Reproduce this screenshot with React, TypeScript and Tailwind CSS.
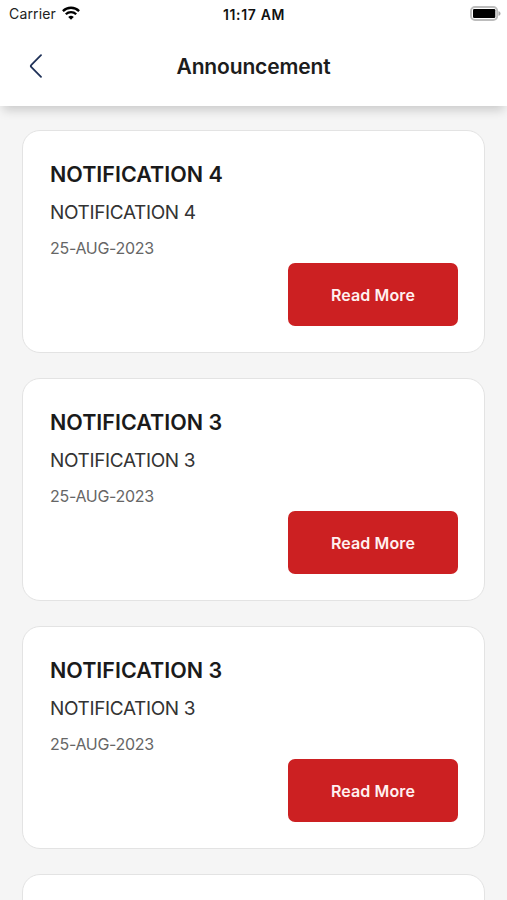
import React, { FC } from "react";

type Announcement = {
  id: number;
  title: string;
  description: string;
  date: string;
};

const announcements: Announcement[] = [
  { id: 1, title: "NOTIFICATION 4", description: "NOTIFICATION 4", date: "25-AUG-2023" },
  { id: 2, title: "NOTIFICATION 3", description: "NOTIFICATION 3", date: "25-AUG-2023" },
  { id: 3, title: "NOTIFICATION 3", description: "NOTIFICATION 3", date: "25-AUG-2023" },
];

const WifiIcon = () => (
  <svg width="18" height="14" viewBox="0 0 18 14" fill="none" stroke="#000" strokeWidth="2.3">
    <path d="M0.9 5.1a11.5 11.5 0 0 1 16.2 0" />
    <path d="M3.8 8.2a7.4 7.4 0 0 1 10.4 0" />
    <path d="M9 13.8 6.2 11a4 4 0 0 1 5.6 0Z" fill="#000" stroke="none" />
  </svg>
);

const BatteryIcon = () => (
  <svg width="31" height="15" viewBox="0 0 31 15" fill="none">
    <rect x="1" y="1" width="26.2" height="13" rx="4" stroke="#bcbcbc" strokeWidth="1.9" />
    <rect x="3" y="3" width="22.3" height="9" rx="1.2" fill="#000" />
    <path d="M28.5 5.2c1.3.4 2 1.2 2 2.3s-.7 1.9-2 2.3Z" fill="#a5a5a5" />
  </svg>
);

const StatusBar = () => (
  <div className="grid h-[26px] grid-cols-3 items-center pl-[9px] pr-[6px] text-[14px] text-[#222]">
    <div className="flex items-center gap-[6px]">
      <span className="tracking-[0.15px]">Carrier</span>
      <WifiIcon />
    </div>
    <span className="pt-[2px] pr-[2px] text-center text-[14px] font-semibold tracking-[0.65px] text-[#111]">11:17 AM</span>
    <div className="flex justify-end">
      <BatteryIcon />
    </div>
  </div>
);

const Header = () => (
  <header className="relative h-[106px] bg-white shadow-[0_7px_10px_-3px_rgba(0,0,0,0.18)]">
    <StatusBar />
    <div className="grid h-[80px] grid-cols-[60px_1fr_60px] items-center">
      <button type="button" aria-label="Back" className="pl-[29px]">
        <svg width="14" height="24" viewBox="0 0 14 24" fill="none" stroke="#1f3158" strokeWidth="1.8" strokeLinecap="round" strokeLinejoin="round">
          <path d="M12 1.2 2.4 10.8q-1.2 1.2 0 2.4L12 22.8" />
        </svg>
      </button>
      <h1 className="pt-[2px] text-center text-[21px] font-semibold tracking-[-0.15px] text-[#1c1c1c]">Announcement</h1>
    </div>
  </header>
);

const AnnouncementCard: FC<{ item: Announcement }> = ({ item }) => (
  <div className="flex h-[223px] shrink-0 flex-col rounded-[18px] border border-[#e3e3e3] bg-white pt-[28px] pr-[26px] pl-[27px]">
    <h2 className="text-[21.5px] leading-[30px] font-semibold text-[#1a1a1a]">{item.title}</h2>
    <p className="mt-[10px] text-[19px] leading-[27px] tracking-[-0.37px] text-[#333]">{item.description}</p>
    <p className="mt-[11px] text-[16px] leading-[22px] tracking-[-0.3px] text-[#666]">{item.date}</p>
    <button
      type="button"
      className="mt-[4px] h-[63px] w-[170px] self-end rounded-[7px] bg-[#cc2022] text-[16px] font-semibold tracking-[0.1px] text-[#fff0f0]"
    >
      Read More
    </button>
  </div>
);

const App = () => {
  return (
    <div className="h-[900px] overflow-hidden bg-[#f5f5f5] font-['Inter',sans-serif]">
      <Header />
      {/* Announcement list */}
      <main className="flex flex-col gap-[25px] px-[22px] pt-[24px]">
        {announcements.map((item) => (
          <AnnouncementCard key={item.id} item={item} />
        ))}
        {/* Top edge of the next card */}
        <div className="h-[223px] shrink-0 rounded-[18px] border border-[#e3e3e3] bg-white" />
      </main>
    </div>
  );
};

export default App;
